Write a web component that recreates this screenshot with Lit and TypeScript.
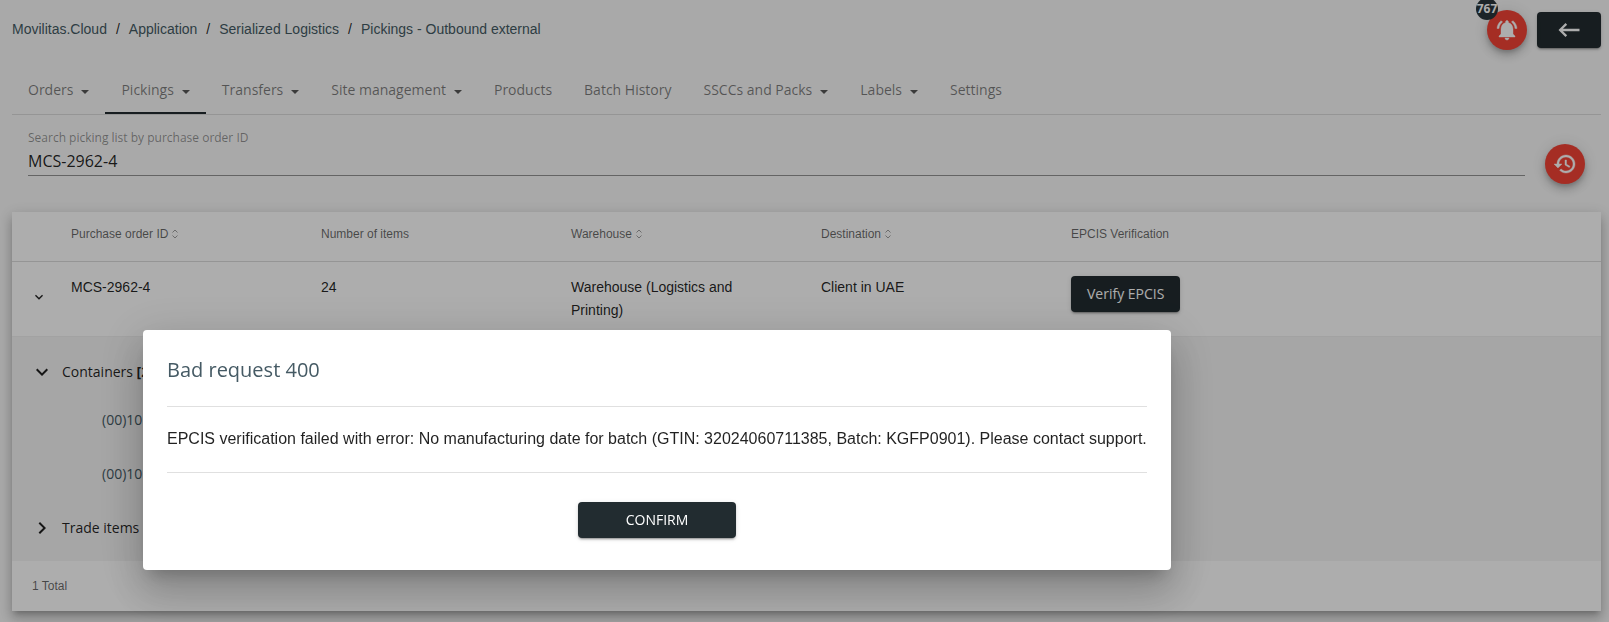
import { LitElement, html, css, nothing } from "lit";
import { customElement, state } from "lit/decorators.js";

interface Tab {
  label: string;
  menu: boolean;
}

interface Column {
  label: string;
  sortable: boolean;
}

const CRUMBS = ["Movilitas.Cloud", "Application", "Serialized Logistics", "Pickings - Outbound external"];

const TABS: Tab[] = [
  { label: "Orders", menu: true },
  { label: "Pickings", menu: true },
  { label: "Transfers", menu: true },
  { label: "Site management", menu: true },
  { label: "Products", menu: false },
  { label: "Batch History", menu: false },
  { label: "SSCCs and Packs", menu: true },
  { label: "Labels", menu: true },
  { label: "Settings", menu: false },
];

const COLUMNS: Column[] = [
  { label: "Purchase order ID", sortable: true },
  { label: "Number of items", sortable: false },
  { label: "Warehouse", sortable: true },
  { label: "Destination", sortable: true },
  { label: "EPCIS Verification", sortable: false },
];

const chevronDown = html`<svg viewBox="0 0 24 24" aria-hidden="true">
  <path d="M7.41 8.59 12 13.17l4.59-4.58L18 10l-6 6-6-6z" />
</svg>`;

const chevronRight = html`<svg viewBox="0 0 24 24" aria-hidden="true">
  <path d="M8.59 16.59 13.17 12 8.59 7.41 10 6l6 6-6 6z" />
</svg>`;

@customElement("app-root")
export class AppRoot extends LitElement {
  static styles = css`
    :host {
      display: block;
      min-height: 100vh;
      box-sizing: border-box;
      padding: 12px 8px 11px 12px;
      background: #fafafa;
      color: rgba(0, 0, 0, 0.87);
      font: 14px/20px "Open Sans", sans-serif;
      overflow: hidden;
    }
    button {
      font: inherit;
      border: 0;
      padding: 0;
      cursor: pointer;
    }
    svg {
      display: block;
      fill: currentColor;
    }
    .topbar {
      display: flex;
      align-items: flex-start;
      justify-content: space-between;
      height: 54px;
    }
    .crumbs {
      display: flex;
      margin: 0;
      padding: 7px 0 0;
      list-style: none;
      font: 14px/20px "Liberation Sans", Arial, sans-serif;
    }
    .crumbs li + li::before {
      content: "/";
      padding: 0 9px;
    }
    .crumbs a {
      color: #455a64;
      text-decoration: none;
    }
    .actions {
      display: flex;
      align-items: flex-start;
      gap: 10px;
    }
    .bell {
      position: relative;
      margin-top: -2px;
    }
    .fab {
      display: grid;
      place-items: center;
      width: 40px;
      height: 40px;
      border-radius: 50%;
      background: #f44336;
      color: #fff;
      box-shadow: 0 3px 5px -1px rgba(0, 0, 0, 0.2), 0 6px 10px 0 rgba(0, 0, 0, 0.14),
        0 1px 18px 0 rgba(0, 0, 0, 0.12);
    }
    .fab svg {
      width: 24px;
      height: 24px;
      stroke: currentColor;
      stroke-width: 0.4;
    }
    .badge {
      position: absolute;
      top: -12px;
      left: -11px;
      width: 22px;
      height: 22px;
      border-radius: 50%;
      background: #2a363b;
      color: #fff;
      font-size: 12px;
      font-weight: 700;
      line-height: 22px;
      text-align: center;
    }
    .btn {
      display: inline-grid;
      place-items: center;
      height: 36px;
      padding: 0 16px;
      border-radius: 4px;
      background: #222c30;
      color: #fff;
      font: 500 14px/20px "Open Sans", sans-serif;
      box-shadow: 0 3px 1px -2px rgba(0, 0, 0, 0.2), 0 2px 2px 0 rgba(0, 0, 0, 0.14),
        0 1px 5px 0 rgba(0, 0, 0, 0.12);
    }
    .back {
      padding: 0 18px;
    }
    .back svg {
      width: 28px;
      height: 28px;
    }
    .tabs {
      display: flex;
      height: 48px;
      border-bottom: 1px solid #dcdcdc;
    }
    .tab {
      display: flex;
      align-items: center;
      gap: 8px;
      padding: 0 16px;
      color: rgba(0, 0, 0, 0.5);
      text-decoration: none;
      white-space: nowrap;
      border-bottom: 2px solid transparent;
      border-top: 2px solid transparent;
    }
    .tab.active {
      border-bottom-color: #222c30;
    }
    .caret {
      width: 8px;
      height: 4px;
      margin-top: 4px;
      color: rgba(0, 0, 0, 0.65);
    }
    .search {
      display: flex;
      align-items: flex-start;
      gap: 20px;
      height: 97px;
      box-sizing: border-box;
      padding: 13px 16px 0;
    }
    .field {
      display: flex;
      flex-direction: column;
      flex: 1;
      border-bottom: 1px solid #949494;
    }
    .field label {
      color: rgba(0, 0, 0, 0.42);
      font-size: 12px;
      line-height: 20px;
    }
    .field input {
      height: 25px;
      padding: 0 0 2px;
      border: 0;
      outline: 0;
      background: none;
      color: rgba(0, 0, 0, 0.87);
      font: 16px/24px "Open Sans", sans-serif;
    }
    .history {
      margin-top: 16px;
    }
    .card {
      background: #fff;
      box-shadow: 0 5px 5px -3px rgba(0, 0, 0, 0.2), 0 8px 10px 1px rgba(0, 0, 0, 0.14),
        0 3px 14px 2px rgba(0, 0, 0, 0.12);
      font-family: "Liberation Sans", Arial, sans-serif;
    }
    table {
      width: 100%;
      border-collapse: collapse;
      table-layout: fixed;
    }
    .col-toggle {
      width: 40px;
    }
    .col-data {
      width: 250px;
    }
    th {
      height: 49px;
      box-sizing: border-box;
      padding: 0 19px 4px;
      border-bottom: 1px solid #dcdcdc;
      color: rgba(0, 0, 0, 0.6);
      font-size: 12px;
      font-weight: 400;
      line-height: 16px;
      text-align: left;
    }
    .head {
      display: flex;
      align-items: center;
      gap: 4px;
    }
    .sort {
      width: 6px;
      height: 10px;
      fill: none;
      stroke: rgba(0, 0, 0, 0.38);
    }
    .cell {
      padding: 14px 19px;
      line-height: 23px;
      vertical-align: top;
    }
    .toggle-cell {
      padding: 0 0 4px 19px;
      vertical-align: middle;
    }
    .toggle {
      display: block;
      background: none;
      color: rgba(0, 0, 0, 0.87);
    }
    .toggle svg {
      width: 16px;
      height: 16px;
    }
    .detail {
      padding: 14px 18px 6px;
      background: #f5f5f5;
      border-top: 1px solid #efefef;
      font-family: "Open Sans", sans-serif;
    }
    .tree,
    .tree ul {
      margin: 0;
      padding: 0;
      list-style: none;
    }
    .node {
      display: flex;
      align-items: center;
      gap: 8px;
      height: 54px;
    }
    .node.open {
      height: 42px;
    }
    .node .toggle svg {
      width: 24px;
      height: 24px;
    }
    .leaf {
      display: flex;
      align-items: center;
      height: 54px;
      padding-left: 72px;
    }
    .leaf a {
      color: #455a64;
      text-decoration: none;
    }
    .footer {
      padding: 0 20px;
      color: rgba(0, 0, 0, 0.6);
      font-size: 12px;
      line-height: 50px;
    }
    .overlay {
      position: fixed;
      inset: 0;
      box-sizing: border-box;
      padding: 330px 16px 0 143px;
      background: rgba(0, 0, 0, 0.32);
    }
    .dialog {
      box-sizing: border-box;
      width: 100%;
      max-width: 1028px;
      padding: 24px 24px 32px;
      border-radius: 4px;
      background: #fff;
      box-shadow: 0 11px 15px -7px rgba(0, 0, 0, 0.2), 0 24px 38px 3px rgba(0, 0, 0, 0.14),
        0 9px 46px 8px rgba(0, 0, 0, 0.12);
    }
    .dialog h2 {
      margin: 0;
      padding-bottom: 20px;
      border-bottom: 1px solid #e0e0e0;
      color: #455a64;
      font-size: 20px;
      font-weight: 400;
      line-height: 32px;
    }
    .dialog p {
      margin: 0;
      padding: 20px 0 21px;
      border-bottom: 1px solid #e0e0e0;
      font: 16px/24px "Liberation Sans", Arial, sans-serif;
    }
    .dialog-actions {
      display: flex;
      justify-content: center;
      padding-top: 29px;
    }
    .confirm {
      min-width: 158px;
    }
  `;

  @state() private dialogOpen = true;

  private close() {
    this.dialogOpen = false;
  }

  private renderTab(tab: Tab) {
    return html`<a class="tab ${tab.label === "Pickings" ? "active" : ""}" href="#">
      ${tab.label}
      ${tab.menu
        ? html`<svg class="caret" viewBox="0 0 8 4" aria-hidden="true"><path d="M0 0h8L4 4z" /></svg>`
        : nothing}
    </a>`;
  }

  private renderHead(column: Column) {
    return html`<th scope="col">
      <div class="head">
        ${column.label}
        ${column.sortable
          ? html`<svg class="sort" viewBox="0 0 6 10" aria-hidden="true">
              <path d="M.5 3.5 3 1l2.500 2.500M.5 6.500 3 9l2.500-2.500" />
            </svg>`
          : nothing}
      </div>
    </th>`;
  }

  private renderDialog() {
    return html`<div class="overlay">
      <section class="dialog" role="dialog" aria-modal="true" aria-labelledby="dialog-title">
        <h2 id="dialog-title">Bad request 400</h2>
        <p>
          EPCIS verification failed with error: No manufacturing date for batch (GTIN: 32024060711385, Batch:
          KGFP0901). Please contact support.
        </p>
        <div class="dialog-actions">
          <button class="btn confirm" @click=${this.close}>CONFIRM</button>
        </div>
      </section>
    </div>`;
  }

  render() {
    return html`
      <header class="topbar">
        <nav aria-label="Breadcrumb">
          <ol class="crumbs">
            ${CRUMBS.map((crumb) => html`<li><a href="#">${crumb}</a></li>`)}
          </ol>
        </nav>
        <div class="actions">
          <div class="bell">
            <button class="fab" aria-label="Notifications">
              <svg viewBox="0 0 24 24" aria-hidden="true">
                <path
                  d="M7.580 4.080 6.150 2.650C3.750 4.480 2.170 7.300 2.030 10.500h2c.15-2.650 1.510-4.970 3.550-6.420zm12.390 6.420h2c-.15-3.200-1.730-6.020-4.120-7.850l-1.420 1.430c2.020 1.450 3.390 3.770 3.540 6.420zM18 11c0-3.070-1.640-5.640-4.500-6.320V4c0-.83-.67-1.500-1.500-1.500s-1.500.67-1.500 1.500v.68C7.630 5.360 6 7.920 6 11v5l-2 2v1h16v-1l-2-2v-5zm-6 11c.14 0 .27-.01.4-.04.65-.14 1.180-.58 1.440-1.180.1-.24.15-.5.15-.78h-4c.01 1.100.9 2 2.010 2z"
                />
              </svg>
            </button>
            <span class="badge">767</span>
          </div>
          <button class="btn back" aria-label="Back">
            <svg viewBox="0 0 24 24" aria-hidden="true">
              <path d="M21 11H6.830l3.580-3.590L9 6l-6 6 6 6 1.410-1.410L6.830 13H21z" />
            </svg>
          </button>
        </div>
      </header>

      <nav class="tabs" aria-label="Sections">${TABS.map((tab) => this.renderTab(tab))}</nav>

      <div class="search">
        <div class="field">
          <label for="order-id">Search picking list by purchase order ID</label>
          <input id="order-id" type="text" .value=${"MCS-2962-4"} />
        </div>
        <button class="fab history" aria-label="History">
          <svg viewBox="0 0 24 24" aria-hidden="true">
            <path
              d="M13 3c-4.970 0-9 4.030-9 9H1l3.890 3.890.07.14L9 12H6c0-3.870 3.130-7 7-7s7 3.130 7 7-3.130 7-7 7c-1.930 0-3.680-.79-4.940-2.060l-1.420 1.420C8.270 19.990 10.510 21 13 21c4.970 0 9-4.030 9-9s-4.030-9-9-9zm-1 5v5l4.280 2.540.72-1.210-3.500-2.080V8H12z"
            />
          </svg>
        </button>
      </div>

      <main class="card">
        <table>
          <colgroup>
            <col class="col-toggle" />
            <col class="col-data" />
            <col class="col-data" />
            <col class="col-data" />
            <col class="col-data" />
            <col />
          </colgroup>
          <thead>
            <tr>
              <th></th>
              ${COLUMNS.map((column) => this.renderHead(column))}
            </tr>
          </thead>
          <tbody>
            <tr>
              <td class="toggle-cell">
                <button class="toggle" aria-label="Collapse row">${chevronDown}</button>
              </td>
              <td class="cell">MCS-2962-4</td>
              <td class="cell">24</td>
              <td class="cell">Warehouse (Logistics and Printing)</td>
              <td class="cell">Client in UAE</td>
              <td class="cell"><button class="btn">Verify EPCIS</button></td>
            </tr>
            <tr>
              <td class="detail" colspan="6">
                <ul class="tree">
                  <li>
                    <div class="node open">
                      <button class="toggle" aria-label="Collapse containers">${chevronDown}</button>
                      <span>Containers <b>[2]</b></span>
                    </div>
                    <ul>
                      <li class="leaf"><a href="#">(00)10</a></li>
                      <li class="leaf"><a href="#">(00)10</a></li>
                    </ul>
                  </li>
                  <li>
                    <div class="node">
                      <button class="toggle" aria-label="Expand trade items">${chevronRight}</button>
                      <span>Trade items</span>
                    </div>
                  </li>
                </ul>
              </td>
            </tr>
          </tbody>
        </table>
        <div class="footer">1 Total</div>
      </main>

      ${this.dialogOpen ? this.renderDialog() : nothing}
    `;
  }
}
